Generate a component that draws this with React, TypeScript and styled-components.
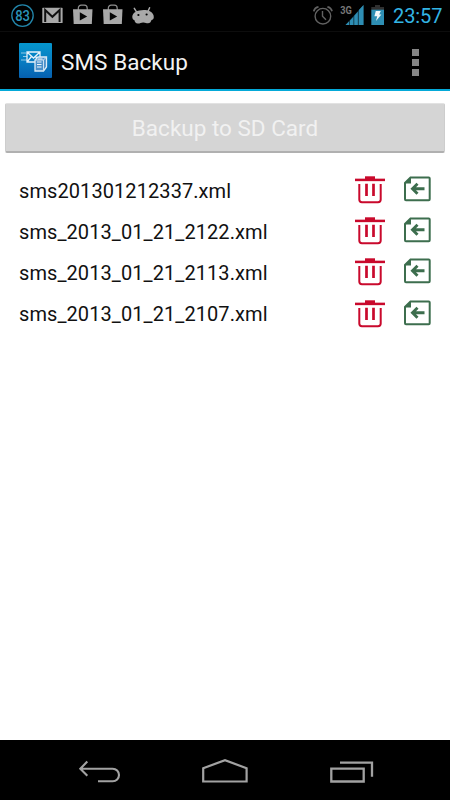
import React from "react";
import styled, { createGlobalStyle } from "styled-components";

const GlobalStyle = createGlobalStyle`
  * { box-sizing: border-box; }
  body { margin: 0; background: #fff; font-family: Roboto, "Noto Sans", sans-serif; }
  svg { display: block; flex: none; }
`;

const Screen = styled.div`
  width: 450px;
  height: 800px;
  display: flex;
  flex-direction: column;
  background: #fff;
  overflow: hidden;
`;

const StatusBar = styled.header`
  height: 32px;
  flex: none;
  display: flex;
  justify-content: space-between;
  background: #000;
  border-bottom: 1px solid #0d0d0d;
  padding: 0 8px 0 11px;
`;

const StatusGroup = styled.div<{ $gap: number }>`
  display: flex;
  align-items: center;
  gap: ${(p) => p.$gap}px;
`;

const Clock = styled.time`
  color: #33b5e5;
  font-size: 20px;
  line-height: 31px;
  width: 49px;
  margin: 2px 0 0 1px;
  white-space: nowrap;
  letter-spacing: -0.1px;
`;

const ActionBar = styled.div`
  height: 59px;
  flex: none;
  display: flex;
  align-items: center;
  background: #000;
  border-bottom: 2px solid #04a9d8;
  padding: 0 31px 0 19px;
`;

const Title = styled.h1`
  margin: 3px auto 0 9px;
  color: #f3f3f3;
  font-size: 22.5px;
  line-height: 30px;
  font-weight: 400;
  letter-spacing: 0.05px;
  white-space: nowrap;
`;

const OverflowButton = styled.button`
  border: 0;
  padding: 0;
  margin-top: 3px;
  background: none;
  display: grid;
  gap: 3px;
`;

const Dot = styled.span`
  width: 7px;
  height: 7px;
  background: #868686;
`;

const Content = styled.main`
  flex: 1;
  padding: 12px 5px 0;
`;

const BackupButton = styled.button`
  display: block;
  width: 100%;
  height: 50px;
  border: 1px solid #cdcdcd;
  border-top-color: #e2e2e2;
  border-bottom: 2px solid #b0b0b0;
  border-radius: 2px;
  background: #d5d5d5;
  color: #f1f1f1;
  font-family: inherit;
  font-size: 22.5px;
  line-height: 30px;
  padding: 1px 0 0;
`;

const FileList = styled.ul`
  list-style: none;
  margin: 0;
  padding: 17px 14px 0;
`;

const FileRow = styled.li`
  height: 41.2px;
  display: flex;
  align-items: flex-start;
  padding-top: 6px;
`;

const FileName = styled.span`
  flex: 1;
  color: #111;
  font-size: 20px;
  line-height: 28px;
  letter-spacing: 0.08px;
  margin-top: 0.6px;
`;

const IconButton = styled.button`
  border: 0;
  padding: 0;
  background: none;
  margin-left: 19px;
`;

const NavBar = styled.nav`
  height: 60px;
  flex: none;
  display: flex;
  justify-content: space-between;
  align-items: flex-start;
  background: #000;
  padding: 18px 76px 0 77px;
`;

const files = [
  "sms201301212337.xml",
  "sms_2013_01_21_2122.xml",
  "sms_2013_01_21_2113.xml",
  "sms_2013_01_21_2107.xml",
];

const BatteryBadge = () => (
  <svg width="24" height="31" viewBox="0 0 24 31">
    <circle cx="11.5" cy="15.6" r="10.7" fill="none" stroke="#2286ab" strokeWidth="1.3" />
    <text x="4.2" y="20.8" textLength="14.8" lengthAdjust="spacingAndGlyphs" fontSize="14.8" fontWeight="500" fill="#2a94ba" fontFamily="Roboto">83</text>
  </svg>
);

const MailIcon = () => (
  <svg width="21" height="31" viewBox="0 0 21 31">
    <rect x="0.3" y="7.8" width="20.3" height="15.2" rx="0.6" fill="#a9a9a9" />
    <path d="M3.2 22V10l7.2 6.8L17.6 10v12" fill="none" stroke="#111" strokeWidth="2" />
  </svg>
);

const StoreIcon = () => (
  <svg width="20" height="31" viewBox="0 0 20 31">
    <path d="M5.3 10V8.2C5.3 6.4 6.6 5.2 8.1 5.2h3.2c1.6 0 2.9 1.2 2.9 3V10" fill="none" stroke="#8e8e8e" strokeWidth="1.2" />
    <path d="M0 9.3h19.5L18.8 24H.7z" fill="#a9a9a9" />
    <path d="M6.8 12.3v8.2l7.4-4.1z" fill="#050505" />
  </svg>
);

const DroidIcon = () => (
  <svg width="23" height="31" viewBox="0 0 23 31">
    <path d="M2.3 8.300l2.500 4M17.600 7.800l-1.800 4" stroke="#a9a9a9" strokeWidth="1.5" strokeLinecap="round" />
    <path d="M3.500 12C7 10 13.500 9.300 17.800 11.200C20.300 12.300 21.900 14.500 21.800 17.200C21.700 19 20.600 19.600 19.500 20C19 22 17.800 23.300 16 23.300C14.500 23.400 13.600 22.400 11 22.500C9 22.600 8 23.700 5.800 23.600C3.800 23.500 2.700 22.200 2.500 20.300C1 19.700.2 18.500.3 16.500C.4 14.600 1.500 13 3.500 12z" fill="#a9a9a9" />
    <circle cx="6.400" cy="15" r="1.100" fill="#000" />
    <circle cx="14.600" cy="14.500" r="1.100" fill="#000" />
  </svg>
);

const AlarmIcon = () => (
  <svg width="20" height="31" viewBox="0 0 20 31">
    <g fill="none" stroke="#626262">
      <circle cx="9.9" cy="16.2" r="7.8" strokeWidth="1.4" />
      <path d="M9.5 11v5.3l3.5 3.5" strokeWidth="1.4" />
      <path d="M.8 11.3C1.3 9 3 7.2 5.5 6.8M14.4 6.8c2.4.4 4.1 2.2 4.6 4.5" strokeWidth="1.8" />
    </g>
  </svg>
);

const SignalIcon = () => (
  <svg width="24" height="31" viewBox="0 0 24 31">
    <text x="0.2" y="14.4" fontSize="11.5" fontWeight="700" fill="#777" fontFamily="Roboto" textLength="11.6" lengthAdjust="spacingAndGlyphs">3G</text>
    <path d="M5.5 25l3.5-3.5V25zM10 20.5l3.3-3.5v8H10zM14.3 15.8l3.5-4V25h-3.5zM18.9 10l4.6-5v20h-4.6z" fill="#2e8fb4" />
    <path d="M5.5 25L23.5 5v20z" fill="#2e8fb4" opacity=".45" />
  </svg>
);

const BatteryIcon = () => (
  <svg width="14" height="31" viewBox="0 0 14 31">
    <path d="M4 5h5v2h4v3H.3V7H4z" fill="#303030" />
    <path d="M.3 9.7H13V25H.3z" fill="#2e8fb4" />
    <path d="M4.8 11h5l-1.6 3.5h2.2L5 21l1.2-4.7H3.4z" fill="#f2f8fa" />
  </svg>
);

const AppIcon = () => (
  <svg width="33" height="35" viewBox="0 0 33 35">
    <defs>
      <linearGradient id="blue" x1="0" y1="0" x2="0" y2="1">
        <stop stopColor="#0596cd" />
        <stop offset=".55" stopColor="#087bc1" />
        <stop offset="1" stopColor="#0660af" />
      </linearGradient>
    </defs>
    <rect width="33" height="35" rx="1" fill="url(#blue)" />
    <path d="M2 10h5M4 13.5h4M2 17h6" stroke="#8fc8e6" strokeWidth="1.2" />
    <path d="M8 9h13v10H8zM8 9l6.5 6L21 9M8 19l4.500-5.500M21 19l-4.500-5.500" fill="none" stroke="#e8f2fa" strokeWidth="1.3" />
    <path d="M16 17l3-3h8.500v10l-3 4H16z" fill="#4b91ca" stroke="#ddecf6" strokeWidth="1.3" />
    <path d="M24.500 28V17H16M24.500 17l3-3" fill="none" stroke="#c9e0f1" />
    <path d="M19 16h4.500M18 19h4.500M18 21.500h4.500M18 24h4.500" stroke="#eef6fc" strokeWidth="1" />
  </svg>
);

const TrashIcon = () => (
  <svg width="30" height="28" viewBox="0 0 30 28">
    <g fill="none" stroke="#c9092c">
      <path d="M0 3.9h30" strokeWidth="2.5" />
      <path d="M10 1.7h10" strokeWidth="2.8" />
      <path d="M4.3 8v15.5q0 2.7 2.7 2.7h16q2.700 0 2.700-2.700V8" strokeWidth="2" />
      <path d="M11.500 7.800v12.200M18.500 7.800v12.200" strokeWidth="2.7" />
    </g>
  </svg>
);

const RestoreIcon = () => (
  <svg width="27" height="28" viewBox="0 0 27 28">
    <g fill="none" stroke="#3d6e4e">
      <path d="M6.500 1.500h18.200q1 0 1 1v20.700q0 1-1 1H2q-1 0-1-1V7z" strokeWidth="2" />
      <path d="M13.500 7.700L8.500 12.700l5 5M9 12.700h11.500" strokeWidth="2.9" />
    </g>
    <path d="M7 1v6.500H.5z" fill="#3d6e4e" />
  </svg>
);

const BackIcon = () => (
  <svg width="44" height="32" viewBox="0 0 44 32">
    <path d="M10.300 3.500L3.300 10.700l7 7M4 10.700h31.700a6.300 6.300 0 0 1 0 12.600H21" fill="none" stroke="#a2a2a2" strokeWidth="2.1" />
  </svg>
);

const HomeIcon = () => (
  <svg width="48" height="32" viewBox="0 0 48 32">
    <path d="M1.200 23.500V10.200L23 2.200l21.600 8v13.300z" fill="none" stroke="#a2a2a2" strokeWidth="2.2" />
  </svg>
);

const RecentsIcon = () => (
  <svg width="44" height="32" viewBox="0 0 44 32">
    <path d="M1.300 10.700h32.400v12.800H1.300zM10 4.600h32v14.100" fill="none" stroke="#a2a2a2" strokeWidth="2.3" />
  </svg>
);

export default function App() {
  return (
    <>
      <GlobalStyle />
      <Screen>
        <StatusBar>
          <StatusGroup $gap={9.5}>
            <StatusGroup $gap={7}>
              <BatteryBadge />
              <MailIcon />
            </StatusGroup>
            <StatusGroup $gap={9}>
              <StatusGroup $gap={10}>
                <StoreIcon />
                <StoreIcon />
              </StatusGroup>
              <DroidIcon />
            </StatusGroup>
          </StatusGroup>
          <StatusGroup $gap={7}>
            <AlarmIcon />
            <SignalIcon />
            <BatteryIcon />
            <Clock>23:57</Clock>
          </StatusGroup>
        </StatusBar>
        <ActionBar>
          <AppIcon />
          <Title>SMS Backup</Title>
          <OverflowButton aria-label="More options">
            <Dot />
            <Dot />
            <Dot />
          </OverflowButton>
        </ActionBar>
        <Content>
          <BackupButton disabled>Backup to SD Card</BackupButton>
          <FileList>
            {files.map((name) => (
              <FileRow key={name}>
                <FileName>{name}</FileName>
                <IconButton aria-label="Delete">
                  <TrashIcon />
                </IconButton>
                <IconButton aria-label="Restore">
                  <RestoreIcon />
                </IconButton>
              </FileRow>
            ))}
          </FileList>
        </Content>
        <NavBar>
          <BackIcon />
          <HomeIcon />
          <RecentsIcon />
        </NavBar>
      </Screen>
    </>
  );
}
